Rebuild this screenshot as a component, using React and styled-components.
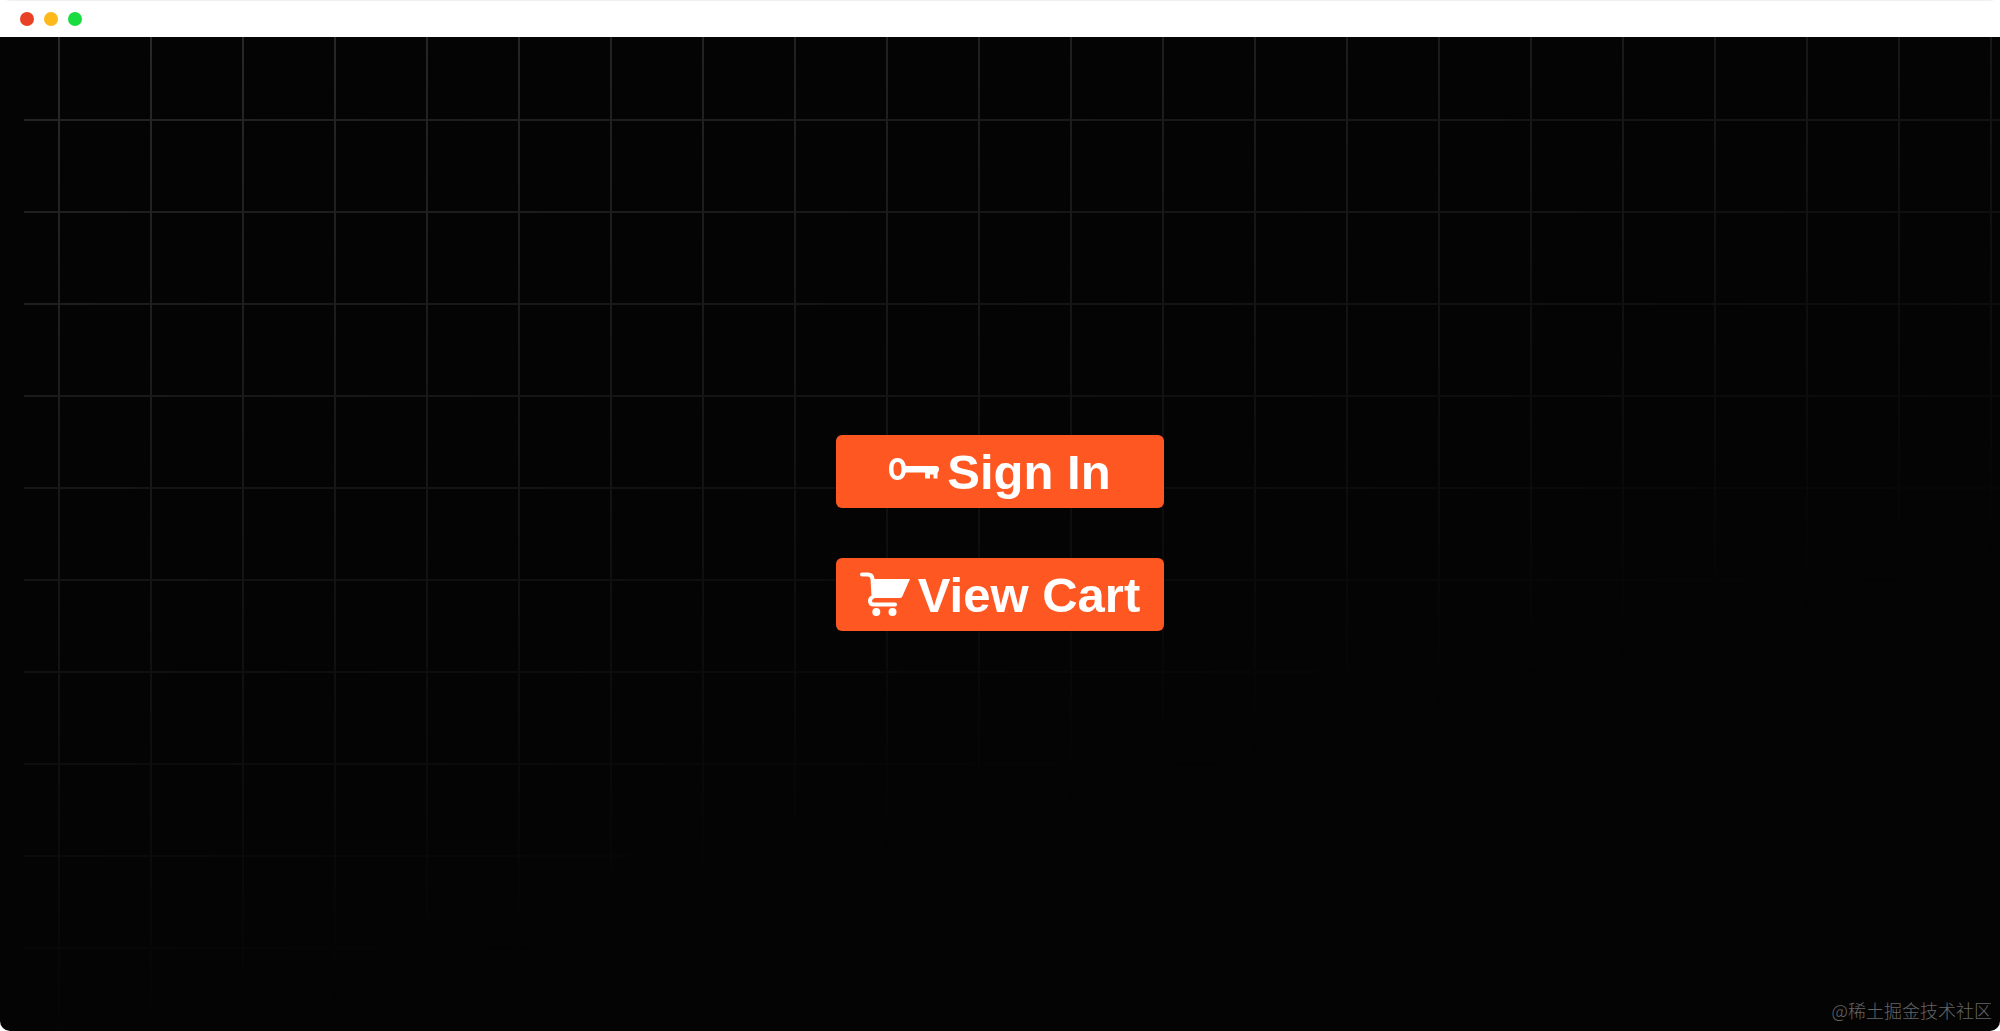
import React from "react";
import styled, { createGlobalStyle } from "styled-components";

const GlobalStyle = createGlobalStyle`
  *, *::before, *::after { box-sizing: border-box; }
  body { margin: 0; background: #fff; }
`;

const Window = styled.div`
  display: flex;
  flex-direction: column;
  min-height: 100vh;
  overflow: hidden;
  border-radius: 10px;
`;

const TitleBar = styled.header`
  display: flex;
  align-items: center;
  gap: 10px;
  height: 37px;
  padding: 0 20px;
  background: #fff;
  border-top: 1px solid #f0f0f0;
`;

const Dot = styled.span`
  width: 14px;
  height: 14px;
  border-radius: 50%;
  background: ${(p) => p.$color};
`;

const Stage = styled.main`
  position: relative;
  flex: 1;
  display: flex;
  flex-direction: column;
  align-items: center;
  justify-content: center;
  gap: 50px;
  padding-bottom: 2px;
  background: #040404;
`;

const Grid = styled.div`
  position: absolute;
  inset: 0;
  background:
    linear-gradient(90deg, #2a2a2a 2px, transparent 2px) 58px 0 / 92px 92px,
    linear-gradient(#262626 2px, transparent 2px) 24px 82px / 92px 92px;
  clip-path: inset(0 0 0 24px);
  mask-image: linear-gradient(165deg, #000, transparent 69%);
`;

const ActionButton = styled.button`
  position: relative;
  display: flex;
  align-items: center;
  justify-content: center;
  gap: 8px;
  width: 328px;
  height: 73px;
  padding: 0 24px;
  border: 0;
  border-radius: 6px;
  background: #ff5722;
  color: #fff;
  font: bold 49px/56px "Liberation Sans", Arial, sans-serif;
  white-space: nowrap;
  cursor: pointer;
`;

const Icon = styled.svg`
  flex: none;
  width: 50px;
  height: 50px;
`;

const Watermark = styled.span`
  position: absolute;
  right: 8px;
  bottom: 9px;
  color: #666;
  font: 300 18px/24px "Noto Sans CJK SC", sans-serif;
`;

const KeyIcon = () => (
  <Icon viewBox="0 0 50 50" aria-hidden="true">
    <path
      fillRule="evenodd"
      d="M8.500 11C14 11 17 15.500 17 22S14 33 8.500 33S0 28.500 0 22S3 11 8.500 11ZM8.500 15C5.500 15 4.500 18 4.500 22S5.500 29 8.500 29S12.500 26 12.500 22S11.500 15 8.500 15Z"
      fill="#fff"
    />
    <path
      d="M15 19H47Q50 19 50 22Q50 24.500 48.500 26V31.500H44.500V27.500H41V31.500H36V25.500H15Z"
      fill="#fff"
    />
  </Icon>
);

const CartIcon = () => (
  <Icon viewBox="0 0 50 50" overflow="visible" aria-hidden="true">
    <path d="M12 9H50L42.500 26Q42 28 40 28H13Z" fill="#fff" />
    <path
      d="M2 4.500H8Q12 4.500 12.500 9L13.500 26.500Q10 28 10 31Q10 34.500 14 34.500H35"
      fill="none"
      stroke="#fff"
      strokeWidth="4"
      strokeLinecap="round"
      strokeLinejoin="round"
    />
    <circle cx="16.300" cy="42" r="4" fill="#fff" />
    <circle cx="32.500" cy="42" r="4" fill="#fff" />
  </Icon>
);

export default function App() {
  return (
    <>
      <GlobalStyle />
      <Window>
        <TitleBar>
          <Dot $color="#e94125" />
          <Dot $color="#fdb91b" />
          <Dot $color="#1adb40" />
        </TitleBar>
        <Stage>
          <Grid />
          <ActionButton type="button">
            <KeyIcon />
            Sign In
          </ActionButton>
          <ActionButton type="button">
            <CartIcon />
            View Cart
          </ActionButton>
          <Watermark>@稀土掘金技术社区</Watermark>
        </Stage>
      </Window>
    </>
  );
}
